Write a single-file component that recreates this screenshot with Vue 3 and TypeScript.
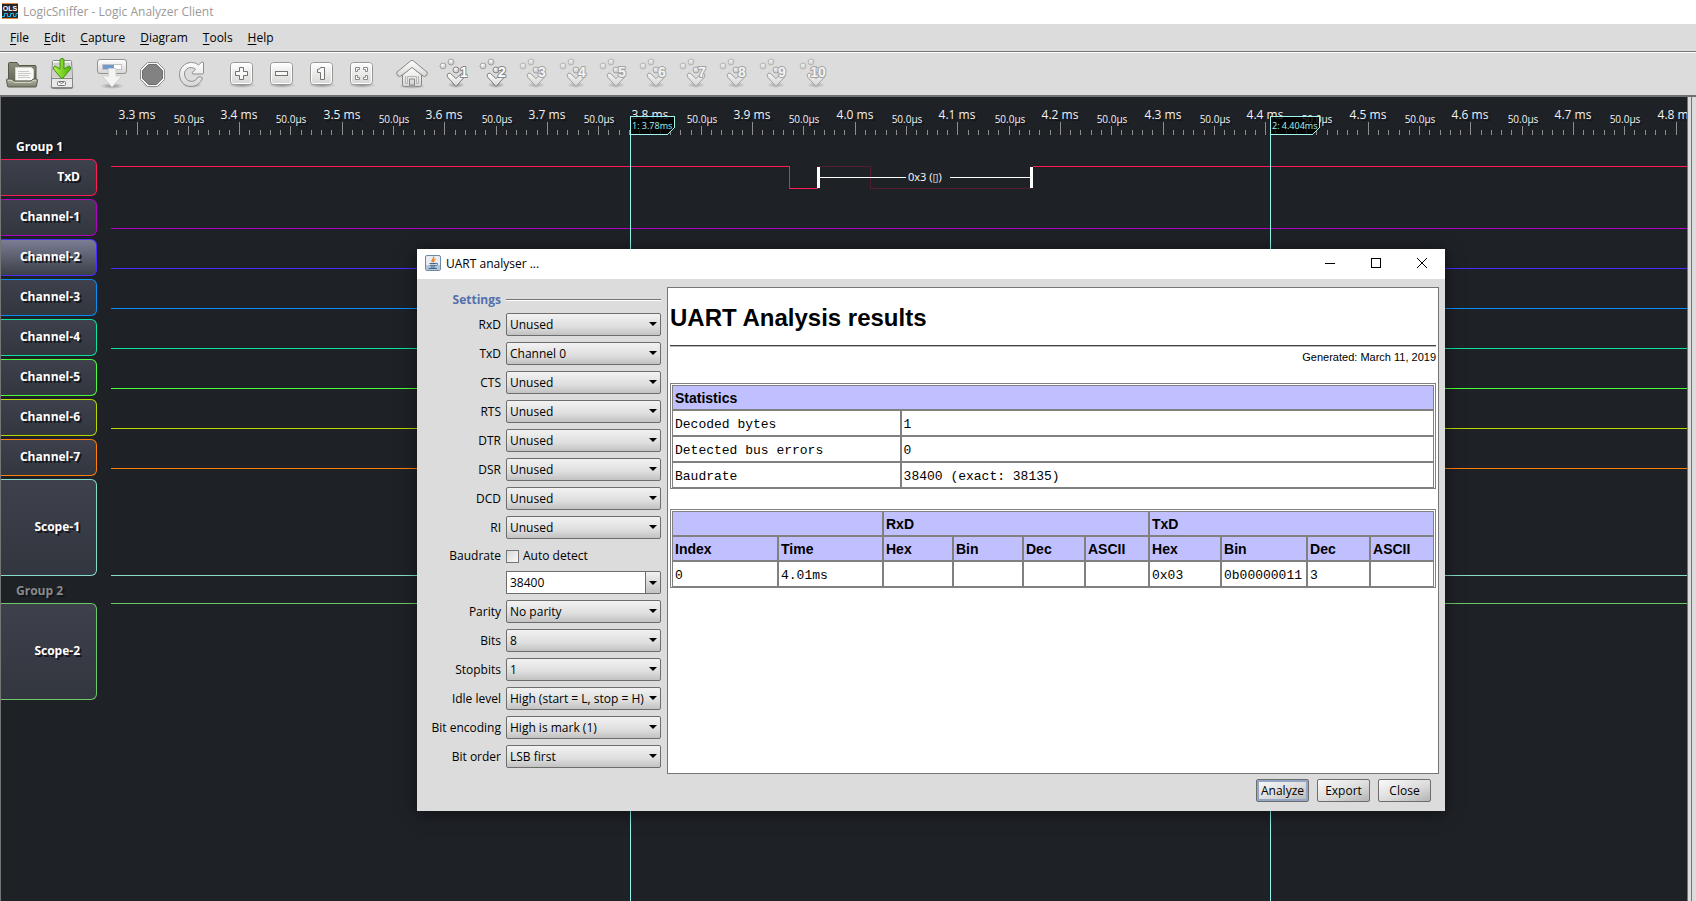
<script setup lang="ts">
import { ref } from 'vue'

const menus = ['File', 'Edit', 'Capture', 'Diagram', 'Tools', 'Help']
const cursorSlots = [1, 2, 3, 4, 5, 6, 7, 8, 9, 10]

interface Channel { name: string; color: string; selected?: boolean; tall?: boolean }
const groupOne: Channel[] = [
  { name: 'TxD', color: '#ff1a55' },
  { name: 'Channel-1', color: '#b000c0' },
  { name: 'Channel-2', color: '#4b2cff', selected: true },
  { name: 'Channel-3', color: '#0a8cf5' },
  { name: 'Channel-4', color: '#0fe0a0' },
  { name: 'Channel-5', color: '#4cff3a' },
  { name: 'Channel-6', color: '#b8d800' },
  { name: 'Channel-7', color: '#ff7f0a' },
  { name: 'Scope-1', color: '#86dccb', tall: true },
]
const groupTwo: Channel[] = [{ name: 'Scope-2', color: '#6cc868', tall: true }]

/* Ruler: one tick per 10 µs, starting at 3.28 ms */
const pxPerTick = 10.26
const ticks = Array.from({ length: 153 }, (_, i) => {
  const unit = 328 + i
  const kind = unit % 10 === 0 ? 'major' : unit % 5 === 0 ? 'mid' : 'minor'
  const top = kind === 'major' ? 25 : kind === 'mid' ? 29 : 33
  return {
    x: Math.round(5 + i * pxPerTick),
    top,
    kind,
    label: kind === 'major' ? `${(unit / 100).toFixed(1)} ms` : kind === 'mid' ? '50.0µs' : '',
  }
})
const labelled = ticks.filter((t) => t.label)

const flatTraces = [
  { y: 131, color: '#b000c0' },
  { y: 171, color: '#4b2cff' },
  { y: 211, color: '#0a8cf5' },
  { y: 251, color: '#0fe0a0' },
  { y: 291, color: '#4cff3a' },
  { y: 331, color: '#b8d800' },
  { y: 371, color: '#ff7f0a' },
  { y: 478, color: '#86dccb' },
  { y: 506, color: '#6cc868' },
]

const cursors = [
  { x: 519, w: 44, text: '1: 3.78ms' },
  { x: 1159, w: 49, text: '2: 4.404ms' },
]

const lines = ref([
  { id: 'rxd', label: 'RxD', value: 'Unused' },
  { id: 'txd', label: 'TxD', value: 'Channel 0' },
  { id: 'cts', label: 'CTS', value: 'Unused' },
  { id: 'rts', label: 'RTS', value: 'Unused' },
  { id: 'dtr', label: 'DTR', value: 'Unused' },
  { id: 'dsr', label: 'DSR', value: 'Unused' },
  { id: 'dcd', label: 'DCD', value: 'Unused' },
  { id: 'ri', label: 'RI', value: 'Unused' },
])
const lineOptions = ['Unused', 'Channel 0', 'Channel 1', 'Channel 2', 'Channel 3']
const frame = ref([
  { id: 'parity', label: 'Parity', value: 'No parity', options: ['No parity', 'Odd parity', 'Even parity'] },
  { id: 'bits', label: 'Bits', value: '8', options: ['5', '6', '7', '8'] },
  { id: 'stop', label: 'Stopbits', value: '1', options: ['1', '1.5', '2'] },
  { id: 'idle', label: 'Idle level', value: 'High (start = L, stop = H)', options: ['High (start = L, stop = H)', 'Low (start = H, stop = L)'] },
  { id: 'enc', label: 'Bit encoding', value: 'High is mark (1)', options: ['High is mark (1)', 'High is space (0)'] },
  { id: 'order', label: 'Bit order', value: 'LSB first', options: ['LSB first', 'MSB first'] },
])
const autoDetect = ref(false)
const baudrate = ref('38400')

const stats = [
  ['Decoded bytes', '1'],
  ['Detected bus errors', '0'],
  ['Baudrate', '38400 (exact: 38135)'],
]
const columns = [
  { name: 'Index', w: 106 }, { name: 'Time', w: 105 },
  { name: 'Hex', w: 70 }, { name: 'Bin', w: 70 }, { name: 'Dec', w: 62 }, { name: 'ASCII', w: 64 },
  { name: 'Hex', w: 72 }, { name: 'Bin', w: 86 }, { name: 'Dec', w: 63 }, { name: 'ASCII', w: 64 },
]
const decoded = ['0', '4.01ms', '', '', '', '', '0x03', '0b00000011', '3', '']
</script>

<template>
  <div class="app">
    <svg class="defs" width="0" height="0" aria-hidden="true">
      <defs>
        <linearGradient id="silver" x1="0" y1="0" x2="0" y2="1">
          <stop offset="0" stop-color="#ffffff" /><stop offset="1" stop-color="#d6d6d4" />
        </linearGradient>
        <linearGradient id="olive" x1="0" y1="0" x2="0" y2="1">
          <stop offset="0" stop-color="#8d8f7c" /><stop offset="1" stop-color="#5f6153" />
        </linearGradient>
        <linearGradient id="tray" x1="0" y1="0" x2="0" y2="1">
          <stop offset="0" stop-color="#babca9" /><stop offset="1" stop-color="#7b7d6d" />
        </linearGradient>
        <linearGradient id="green" x1="0" y1="0" x2="1" y2="0">
          <stop offset="0" stop-color="#b4f04c" /><stop offset="1" stop-color="#4db80a" />
        </linearGradient>
        <radialGradient id="ball" cx="0.4" cy="0.3" r="0.7">
          <stop offset="0" stop-color="#ffffff" /><stop offset="1" stop-color="#bcbcba" />
        </radialGradient>
        <radialGradient id="shade">
          <stop offset="0" stop-color="#000" stop-opacity="0.35" /><stop offset="1" stop-color="#000" stop-opacity="0" />
        </radialGradient>
      </defs>
    </svg>

    <header class="titlebar">
      <svg class="logo" width="16" height="16" viewBox="0 0 16 16" aria-hidden="true">
        <rect width="16" height="16" fill="#26262b" />
        <rect width="16" height="1" fill="#e88a3c" /><rect y="15" width="16" height="1" fill="#e88a3c" />
        <text x="8" y="8" text-anchor="middle" class="logo-text">OLS</text>
        <path d="M0 13.500H2.500V10.500H5.500V13.500H8.500V10.500H11.500V13.500H14V10.500H16" fill="none" stroke="#19b5ee" />
      </svg>
      <span>LogicSniffer - Logic Analyzer Client</span>
    </header>

    <nav class="menubar">
      <button v-for="m in menus" :key="m" type="button"><u>{{ m[0] }}</u>{{ m.slice(1) }}</button>
    </nav>

    <div class="toolbar" role="toolbar">
      <button type="button" aria-label="Open">
        <svg viewBox="0 0 32 32">
          <path d="M2.500 26V5.500q0-1 1-1H11l2 3h16q1 0 1 1V26z" fill="url(#olive)" stroke="#55574a" />
          <path d="M9.500 9.500h16l2 2v11h-18z" fill="#f8f8f7" stroke="#d2d2cf" />
          <path d="M12 13.500h11M12 15.500h13M12 17.500h11M12 19.500h12" stroke="#c9c9c9" />
          <path d="M.500 22q0-1 1-1H6l2 2h17l2-2h3.500q1 0 1 1l-1 6q0 1-1 1h-27q-1 0-1-1z" fill="url(#tray)" stroke="#5b5d50" />
          <path d="M2 22.500h4l2 2h17l2-2h3" fill="none" stroke="#cfd1bf" />
        </svg>
      </button>
      <button type="button" aria-label="Save">
        <svg viewBox="0 0 32 32">
          <ellipse cx="16" cy="29" rx="14" ry="3" fill="url(#shade)" />
          <path d="M6.500 3.500q0-1 1-1h17q1 0 1 1l1 17v9q0 1-1 1h-19q-1 0-1-1v-9z" fill="url(#silver)" stroke="#868686" />
          <path d="M7.500 4.500h17l1 15h-19z" fill="#cfd0cc" />
          <path d="M5.500 20.500h21v9h-21z" fill="#e9e9e8" stroke="#868686" />
          <rect x="11.500" y="23.500" width="8" height="4" rx="1" fill="#f4f4f4" stroke="#777" />
          <path d="M13 24l2.500 1.500L18 24" fill="none" stroke="#777" />
          <path d="M14 2q0-1.500 2-1.500T18 2v9l5-3q2 .500 1.500 3L17 20q-1 1-2 0l-7.500-9q-.500-2.500 1.500-3l5 3z" fill="url(#green)" stroke="#3c9410" />
        </svg>
      </button>
      <span class="gap"></span>
      <button type="button" aria-label="Capture">
        <svg viewBox="0 0 32 32">
          <ellipse cx="16" cy="28" rx="12" ry="3" fill="url(#shade)" />
          <rect x="1.500" y="1.500" width="29" height="14" rx="2.500" fill="url(#silver)" stroke="#929290" />
          <rect x="6.500" y="6.500" width="19" height="5" fill="#fff" stroke="#c2c2c2" />
          <rect x="7" y="7" width="11" height="4" fill="#6d9ad0" />
          <path d="M12.500 10.500h7.500v7.500h6L16 29 6 18h6.500z" fill="#f4f4f3" stroke="#d0d0ce" />
        </svg>
      </button>
      <button type="button" aria-label="Stop">
        <svg viewBox="0 0 32 32">
          <ellipse cx="16" cy="27" rx="10" ry="3" fill="url(#shade)" />
          <path d="M11.500 4.500h10l7 7v10l-7 7h-10l-7-7v-10z" fill="#f7f7f7" stroke="#8e8e8e" />
          <path d="M12.500 6.500h8l6 6v8l-6 6h-8l-6-6v-8z" fill="#828282" stroke="#6e6e6e" />
        </svg>
      </button>
      <button type="button" aria-label="Repeat capture">
        <svg viewBox="0 0 32 32">
          <ellipse cx="16" cy="27" rx="10" ry="3" fill="url(#shade)" />
          <path d="M15.500 4.500c3 0 5.200 1 7 2.500l3.500-3q1.500-.500 1.500 1v10q0 1-1 1h-9.500q-1.500-.500-.500-1.800l3-3C14.500 7.500 8.500 10.500 8.500 16c0 8 10.500 10 13 3.500q2.500-2 5 .500c-2 5.500-6.500 8.500-11.500 8.500C8 28.500 3.500 23 3.500 16.500S8.500 4.500 15.500 4.500z" fill="url(#silver)" stroke="#8e8e8c" />
        </svg>
      </button>
      <span class="gap"></span>
      <button v-for="z in ['in', 'out', 'original', 'fit']" :key="z" type="button" :aria-label="'Zoom ' + z">
        <svg viewBox="0 0 32 32">
          <ellipse cx="16" cy="27" rx="14" ry="3" fill="url(#shade)" />
          <rect x="4.500" y="4.500" width="22" height="22" rx="3.500" fill="url(#silver)" stroke="#979795" />
          <rect x="5.500" y="5.500" width="20" height="20" rx="2.500" fill="none" stroke="#fff" />
          <path v-if="z === 'in'" d="M13.500 9.500h4v4h4v4h-4v4h-4v-4h-4v-4h4z" fill="#f8f8f8" stroke="#727270" />
          <rect v-else-if="z === 'out'" x="9.500" y="13.500" width="12" height="4" fill="#f8f8f8" stroke="#727270" />
          <path v-else-if="z === 'original'" d="M14.500 9.500h4v12h-4v-7h-3v-3q2.500 0 3-2z" fill="#f8f8f8" stroke="#727270" />
          <path v-else d="M9.500 13.500v-4h4v2h-2v2zM17.500 9.500h4v4h-2v-2h-2zM9.500 17.500v4h4v-2h-2v-2zM21.500 17.500v4h-4v-2h2v-2z" fill="#fff" stroke="#8a8a88" />
        </svg>
      </button>
      <span class="gap"></span>
      <button type="button" aria-label="Go to trigger">
        <svg viewBox="0 0 32 32">
          <ellipse cx="16" cy="28" rx="14" ry="3" fill="url(#shade)" />
          <path d="M6.500 17v9.500q0 2 2 2h4q1 0 1-1V21h5v6.500q0 1 1 1h4q2 0 2-2V17L16 9z" fill="url(#silver)" stroke="#878785" />
          <path d="M9.500 18v7.500h2v-7h9v7h2V18" fill="none" stroke="#b5b5b3" />
          <path d="M14.500 3q1.500-1.300 3 0L31 14q1 2-1 4-1.500 1-3 0L16 9.500 5 18q-1.500 1-3 0-2-2-1-4z" fill="url(#silver)" stroke="#878785" />
        </svg>
      </button>
      <button v-for="n in cursorSlots" :key="n" type="button" :aria-label="'Go to cursor ' + n" :disabled="n > 2">
        <svg viewBox="0 0 32 32">
          <ellipse cx="20" cy="27" rx="9" ry="3" fill="url(#shade)" />
          <circle cx="7" cy="8" r="3" fill="url(#ball)" stroke="#a3a3a1" />
          <circle cx="15" cy="4" r="3" fill="url(#ball)" stroke="#a3a3a1" />
          <circle cx="20" cy="12" r="3" fill="url(#ball)" stroke="#858583" />
          <path d="M14.500 15.500l5.500 5 5.500-5q1.500-1 3 .500 1 1.500-.500 3.500L20 28.500l-8-9q-1.500-2-.500-3.500 1.500-1.500 3-.500z" fill="url(#silver)" stroke="#7c7c7a" />
          <text :x="n === 10 ? 22 : n === 1 ? 28 : 26" y="19" text-anchor="middle" class="slot-no">{{ n }}</text>
        </svg>
      </button>
    </div>

    <main class="workspace">
      <div class="channels">
        <h2 class="group">Group 1</h2>
        <button v-for="c in groupOne" :key="c.name" type="button" class="channel" :class="{ selected: c.selected, tall: c.tall }" :style="{ borderColor: c.color }">{{ c.name }}</button>
        <h2 class="group dim">Group 2</h2>
        <button v-for="c in groupTwo" :key="c.name" type="button" class="channel tall" :style="{ borderColor: c.color }">{{ c.name }}</button>
      </div>

      <svg class="signals" shape-rendering="crispEdges">
        <rect v-for="t in ticks" :key="t.x" :x="t.x" :y="t.top" width="1" :height="38 - t.top" fill="#8d8d8d" />
        <text v-for="t in labelled" :key="t.x" :x="t.kind === 'major' ? t.x : t.x + 1" :y="t.kind === 'major' ? 22 : 26" text-anchor="middle" :class="['time', t.kind]">{{ t.label }}</text>

        <rect v-for="f in flatTraces" :key="f.y" x="0" :y="f.y" width="100%" height="1" :fill="f.color" />

        <g fill="#ff1a55">
          <rect x="0" y="69" width="679" height="1" />
          <rect x="678" y="69" width="1" height="23" />
          <rect x="678" y="91" width="29" height="1" />
          <rect x="922" y="69" width="100%" height="1" />
        </g>
        <g fill="#541c30">
          <rect x="707" y="69" width="53" height="1" />
          <rect x="759" y="69" width="1" height="23" />
          <rect x="759" y="91" width="162" height="1" />
        </g>

        <g v-for="c in cursors" :key="c.text">
          <rect :x="c.x" y="19" width="1" height="100%" fill="#8ff5f0" />
          <path :d="`M${c.x} 19h${c.w}v12l-6 6h-${c.w - 6}z`" class="flag" />
          <text :x="c.x + 2" y="32" class="flag-text">{{ c.text }}</text>
        </g>

        <g fill="#fff">
          <rect x="706" y="70" width="3" height="21" />
          <rect x="919" y="70" width="3" height="21" />
          <rect x="709" y="80" width="86" height="1" />
          <rect x="839" y="80" width="80" height="1" />
          <text x="797" y="84" class="decoded">0x3 (<tspan class="tofu">▯</tspan>)</text>
        </g>
      </svg>
      <div class="scroll-edge"></div>
    </main>

    <section class="dialog" role="dialog" aria-labelledby="dialog-title">
      <header class="dialog-title">
        <svg width="16" height="16" viewBox="0 0 16 16" aria-hidden="true">
          <rect x="0.500" y="0.500" width="15" height="15" rx="1.500" fill="#e8edf2" stroke="#7089a3" />
          <path d="M1 10h14v5H1z" fill="#b6c6d6" />
          <path d="M8.500 1.500c1.500 2-3 3-1 5.500M10.500 4c-2 1-2.500 2-1.500 3.500" fill="none" stroke="#ee7a1c" stroke-width="1.300" />
          <path d="M4.500 8.500h6.500M5 10.300h5.500M5.500 12h4.500M11 8.300c2.500-.500 2 2-.500 2.500M3.500 13.500h8.500" fill="none" stroke="#41698f" />
        </svg>
        <h1 id="dialog-title">UART analyser ...</h1>
        <div class="window-buttons">
          <button type="button" aria-label="Minimize"><svg viewBox="0 0 10 10" shape-rendering="crispEdges"><rect y="5" width="10" height="1" /></svg></button>
          <button type="button" aria-label="Maximize"><svg viewBox="0 0 10 10" shape-rendering="crispEdges"><path d="M0 0h10v10H0zM1 1v8h8V1z" fill-rule="evenodd" /></svg></button>
          <button type="button" aria-label="Close window"><svg viewBox="0 0 10 10"><path d="M0 0l10 10M10 0L0 10" stroke="#000" /></svg></button>
        </div>
      </header>

      <div class="dialog-body">
        <form class="settings" @submit.prevent>
          <h2>Settings</h2>
          <hr />
          <template v-for="l in lines" :key="l.id">
            <label :for="l.id">{{ l.label }}</label>
            <span class="combo"><select :id="l.id" v-model="l.value"><option v-for="o in lineOptions" :key="o">{{ o }}</option></select></span>
          </template>
          <span class="label">Baudrate</span>
          <label class="check"><input v-model="autoDetect" type="checkbox" />Auto detect</label>
          <span class="editable">
            <input v-model="baudrate" type="text" aria-label="Baudrate" />
            <button type="button" aria-label="Choose baudrate"></button>
          </span>
          <template v-for="f in frame" :key="f.id">
            <label :for="f.id">{{ f.label }}</label>
            <span class="combo"><select :id="f.id" v-model="f.value"><option v-for="o in f.options" :key="o">{{ o }}</option></select></span>
          </template>
        </form>

        <article class="results">
          <h2>UART Analysis results</h2>
          <hr />
          <p>Generated: March 11, 2019</p>
          <table>
            <colgroup><col class="stat-name" /><col /></colgroup>
            <thead><tr><th colspan="2">Statistics</th></tr></thead>
            <tbody>
              <tr v-for="s in stats" :key="s[0]"><td>{{ s[0] }}</td><td>{{ s[1] }}</td></tr>
            </tbody>
          </table>
          <table>
            <colgroup><col v-for="(c, i) in columns" :key="i" :style="{ width: c.w + 'px' }" /></colgroup>
            <thead>
              <tr><th colspan="2"></th><th colspan="4">RxD</th><th colspan="4">TxD</th></tr>
              <tr><th v-for="(c, i) in columns" :key="i">{{ c.name }}</th></tr>
            </thead>
            <tbody>
              <tr><td v-for="(d, i) in decoded" :key="i">{{ d }}</td></tr>
            </tbody>
          </table>
        </article>
      </div>

      <footer class="actions">
        <button type="button" class="focused">Analyze</button>
        <button type="button">Export</button>
        <button type="button">Close</button>
      </footer>
    </section>
  </div>
</template>

<style>
body { margin: 0; background: #1e2126; }
</style>

<style scoped>
.app {
  position: relative;
  display: flex;
  flex-direction: column;
  height: 100vh;
  overflow: hidden;
  background: #dcdcdc;
  color: #000;
  font: 12px/16px "Open Sans", "Noto Sans", sans-serif;
}
.app * { box-sizing: border-box; }
.defs { position: absolute; }
button, select, input { font: inherit; color: inherit; margin: 0; padding: 0; border-radius: 0; }
h1, h2, p { margin: 0; font-size: 12px; font-weight: 400; }

.titlebar { display: flex; align-items: center; gap: 5px; height: 24px; padding: 0 2px; background: #fff; color: #999; }
.titlebar .logo { margin-bottom: 2px; }
.logo-text { font: bold 7px "Liberation Sans", sans-serif; fill: #fff; }

.menubar { display: flex; align-items: center; gap: 15px; height: 28px; padding-left: 10px; border-bottom: 1px solid #757575; }
.menubar button { border: 0; background: none; }
.menubar u { text-underline-offset: 2px; }

.toolbar { display: flex; align-items: center; height: 45px; padding-left: 2px; border-top: 1px solid #fff; border-bottom: 2px solid #6f6f6f; }
.toolbar button { display: grid; place-items: center; width: 40px; height: 40px; border: 0; background: none; }
.toolbar button svg { width: 32px; height: 32px; }
.toolbar button:disabled svg { opacity: 0.65; }
.gap { width: 10px; }
.slot-no { font: bold 14px "Liberation Sans", sans-serif; fill: #fff; stroke: #858583; stroke-width: 2px; stroke-linejoin: round; paint-order: stroke; }

.workspace { flex: 1; min-height: 0; display: flex; border-left: 1px solid #757575; background: #1e2126; }
.channels { flex: none; width: 110px; padding-top: 38px; }
.group { height: 24px; padding-left: 15px; color: #fff; font-weight: 700; line-height: 24px; text-shadow: 2px 2px 0 #12141c; }
.group.dim { color: #8a8a8a; }
.channel {
  display: block; width: 96px; height: 37px; margin-bottom: 3px; padding: 0 16px 2px 0;
  border: 1px solid; border-left: 0; border-radius: 0 6px 6px 0;
  background: linear-gradient(#3e414c, #32363e);
  color: #fff; font-weight: 700; text-align: right; text-shadow: 2px 2px 0 #14161f;
}
.channel.selected { background: linear-gradient(#7b7d94, #3b4048); }
.channel.tall { height: 97px; }
.signals { flex: 1; min-width: 0; height: 100%; }
.time { fill: #f2f2f2; font-size: 12px; text-shadow: 2px 2px 0 #12141c; }
.time.mid { font-size: 10px; }
.flag { fill: rgba(0, 0, 0, 0.8); stroke: #9ff5f0; }
.flag-text { fill: #9ff5f0; font-size: 9px; }
.decoded { font-size: 11px; }
.tofu { font-family: "DejaVu Sans", sans-serif; font-size: 11px; }
.scroll-edge { flex: none; width: 9px; border-left: 1px solid #757575; background: linear-gradient(90deg, #dcdcdc 3px, #757575 3px, #757575 4px, #dcdcdc 4px); }

.dialog { position: absolute; top: 249px; left: 417px; right: 251px; background: #dcdcdc; box-shadow: 0 2px 16px rgba(0, 0, 0, 0.5); }
.dialog-title { display: flex; align-items: center; gap: 5px; height: 30px; padding-left: 8px; background: #fff; }
.dialog-title > svg { margin-bottom: 2px; }
.window-buttons { display: flex; align-self: flex-start; margin-left: auto; }
.window-buttons button { display: grid; place-items: center; width: 46px; height: 28px; border: 0; background: none; }
.window-buttons svg { width: 10px; height: 10px; }

.dialog-body { display: flex; gap: 6px; padding: 8px 6px 5px; }
.settings { flex: none; display: grid; grid-template-columns: 78px 155px; gap: 6px 5px; align-items: center; padding: 6px 0; }
.settings > label, .label { text-align: right; white-space: nowrap; }
.settings h2 { color: #5470ac; font-weight: 700; line-height: 14px; text-align: right; }
.settings hr { width: 100%; height: 2px; margin: 0; border: 0; border-top: 1px solid #757575; border-bottom: 1px solid #fff; }
.combo { position: relative; display: block; height: 23px; }
.combo::after, .editable button::after {
  content: ""; border: 4px solid transparent; border-top-color: #000; border-bottom: 0;
}
.combo::after { position: absolute; top: 9px; right: 4px; pointer-events: none; }
select {
  appearance: none; display: block; width: 100%; height: 23px; padding: 0 0 0 3px;
  border: 1px solid #6d6d6d; border-radius: 2px;
  background: linear-gradient(#f2f2f2, #dedede 60%, #c2c2c2);
}
.label { padding-top: 2px; }
.settings .check { display: flex; align-items: center; gap: 4px; height: 20px; padding-top: 2px; }
.check input { appearance: none; width: 13px; height: 13px; border: 1px solid #757575; background: linear-gradient(135deg, #d8d8d8, #fafafa); }
.editable { grid-column: 2; display: flex; height: 23px; }
.editable input { flex: 1; min-width: 0; padding: 0 3px; border: 1px solid #6d6d6d; background: #fff; }
.editable button { display: grid; place-items: center; width: 15px; border: 1px solid #6d6d6d; border-left: 0; border-radius: 0 2px 2px 0; background: linear-gradient(#f2f2f2, #c2c2c2); }

.results { flex: 1; min-width: 0; padding: 14px 2px 13px; border: 1px solid #757575; background: #fff; font-family: "Liberation Sans", Arial, sans-serif; }
.results h2 { font-size: 24px; font-weight: 700; line-height: 32px; }
.results hr { height: 2px; margin: 11px 0 6px; border: 0; border-top: 1px solid #444; border-bottom: 1px solid #b8b8b8; }
.results p { margin-bottom: 22px; font-size: 11px; line-height: 8px; text-align: right; }
table { width: 100%; margin-bottom: 20px; padding: 1px 1px 0; table-layout: fixed; border: 1px solid #808080; border-collapse: separate; border-spacing: 0; }
.stat-name { width: 30%; }
th, td { height: 26px; padding: 0 2px; border: 1px solid #808080; text-align: left; white-space: nowrap; }
th { height: 25px; background: #c0c0ff; font-size: 14px; font-weight: 700; }
td { padding-top: 2px; font: 13px "Liberation Mono", monospace; }

.actions { display: flex; justify-content: flex-end; gap: 8px; padding: 0 14px 9px; }
.actions button { width: 53px; height: 23px; border: 1px solid #6d6d6d; border-radius: 2px; background: linear-gradient(160deg, #fafafa, #dcdcdc 55%, #b4b4b4); }
.actions .focused { box-shadow: inset 0 0 0 2px #94a6c6; }
</style>
